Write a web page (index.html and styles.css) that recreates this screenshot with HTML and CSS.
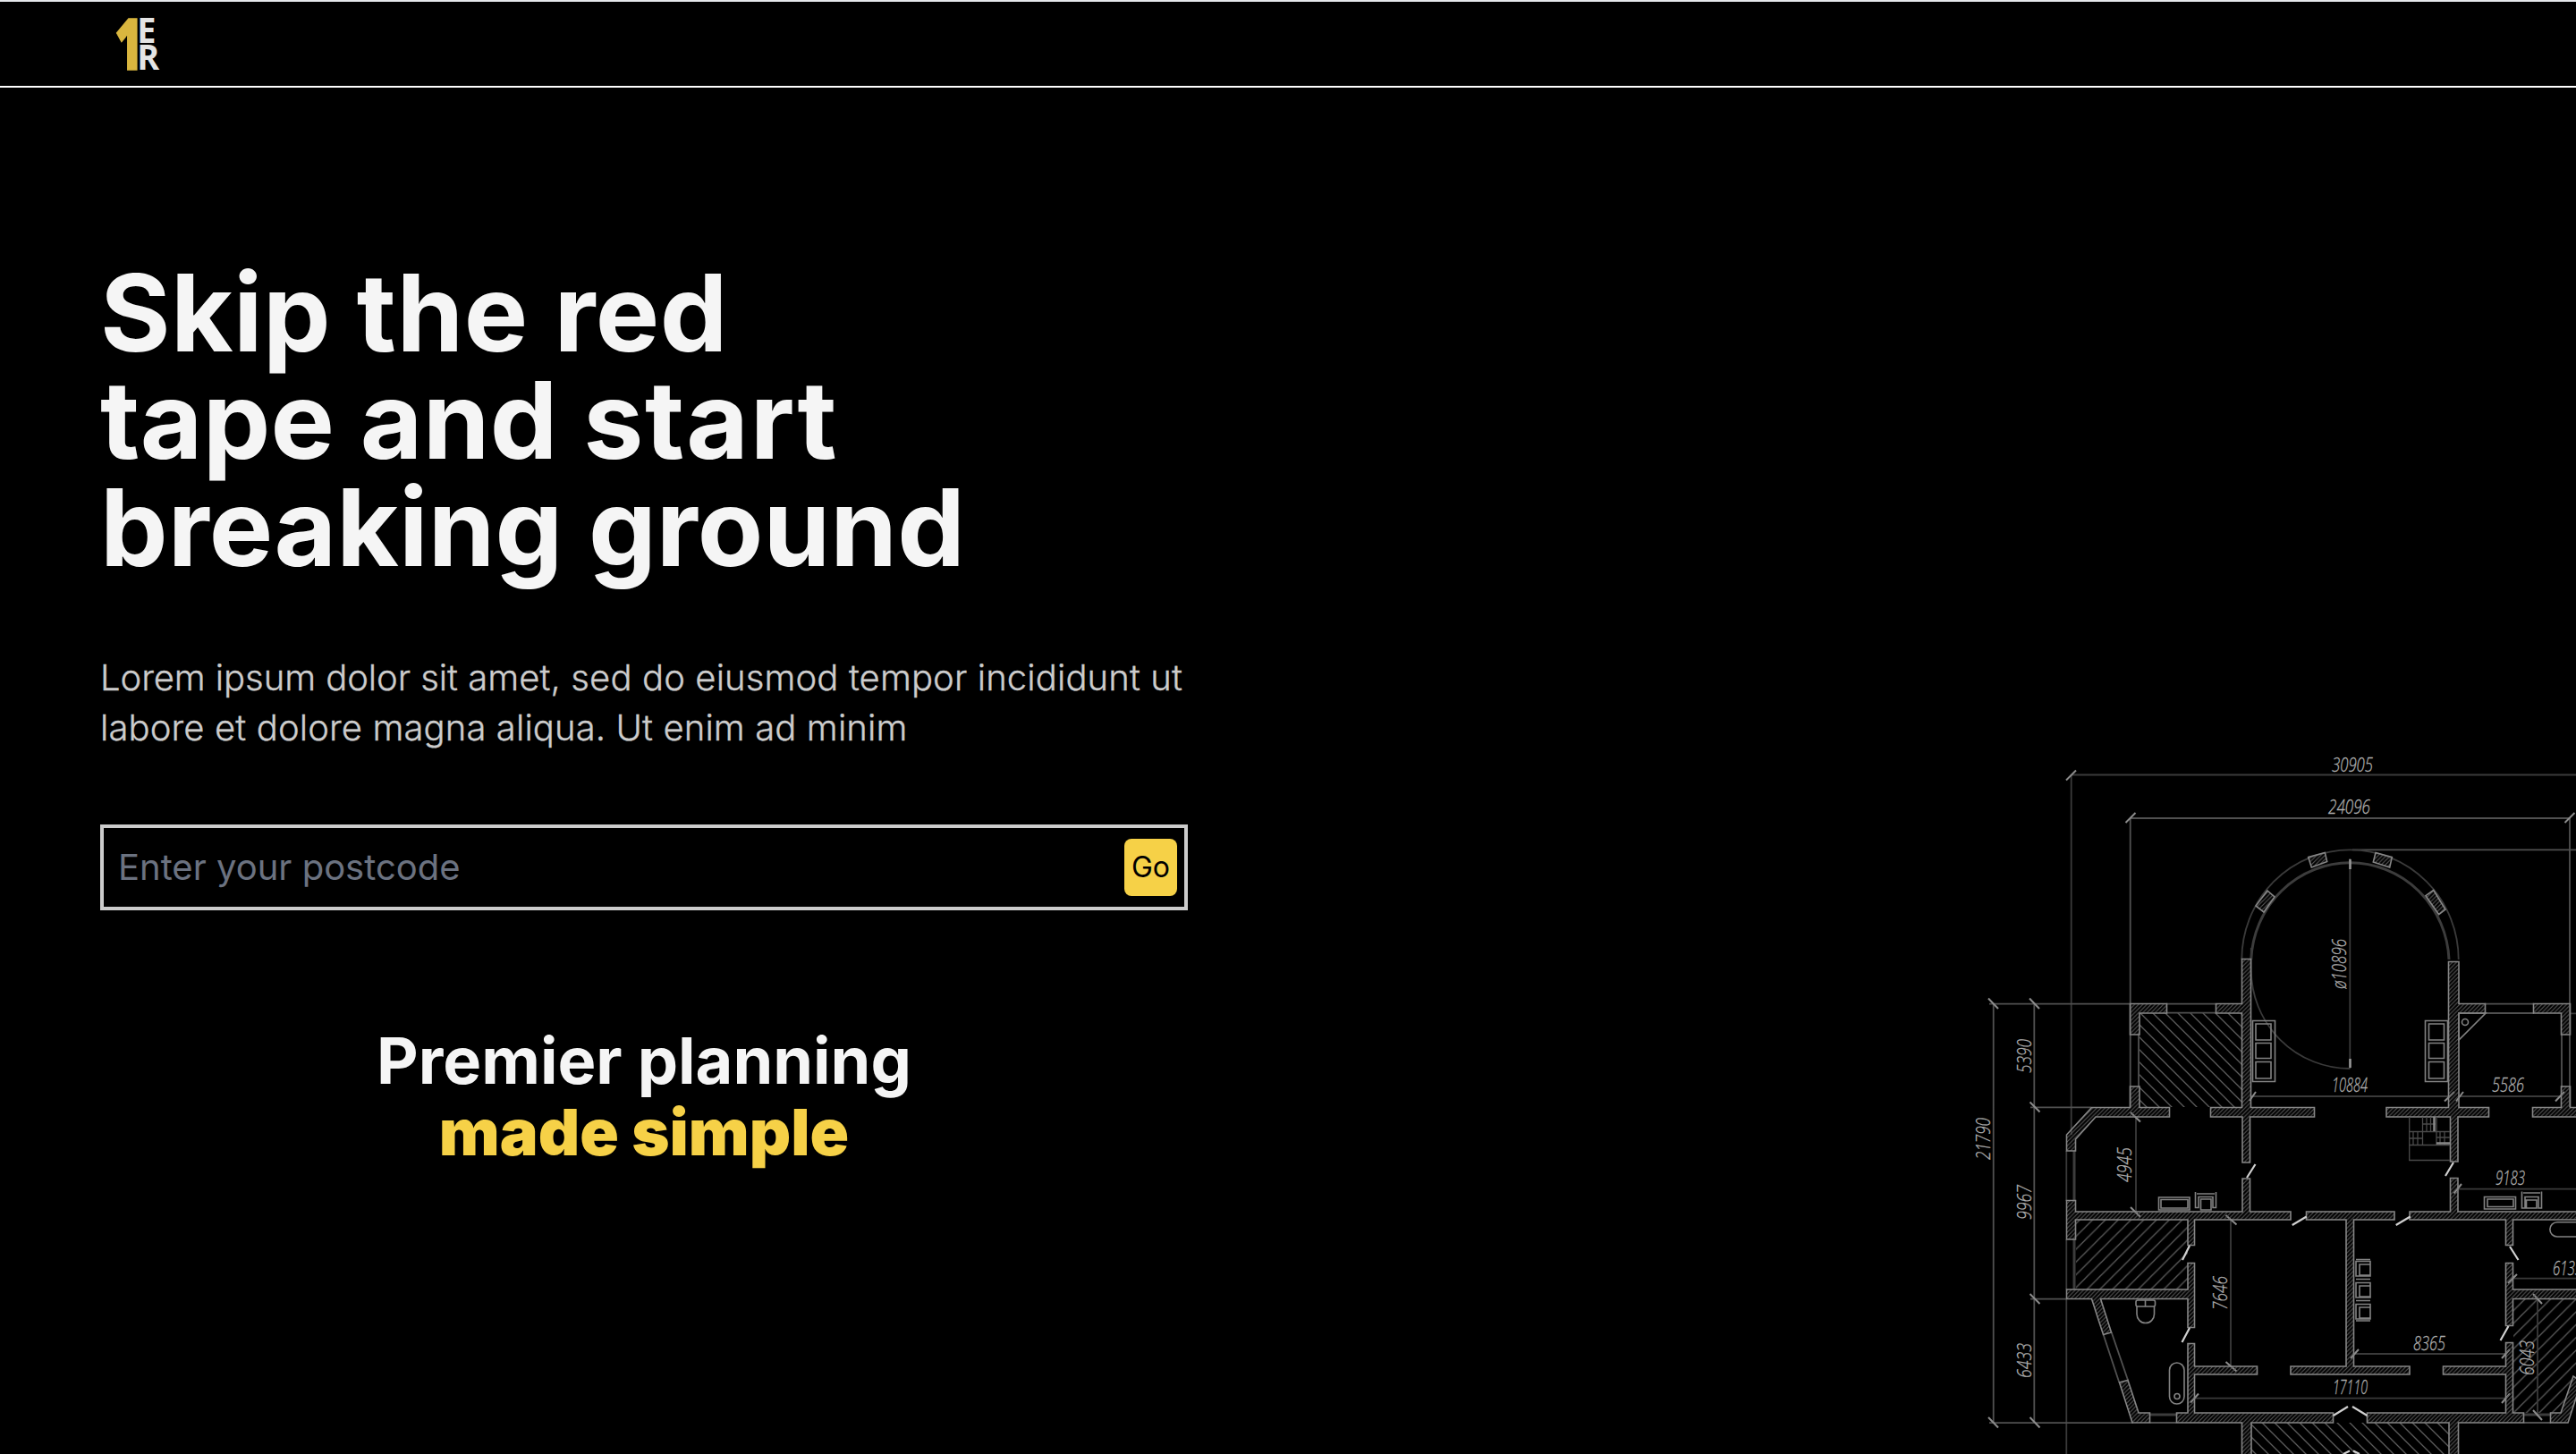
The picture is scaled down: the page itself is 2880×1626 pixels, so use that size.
FILE: index.html
```html
<!DOCTYPE html>
<html lang="en">
<head>
<meta charset="utf-8">
<title>1ER</title>
<link rel="stylesheet" href="styles.css">
</head>
<body>
<header class="nav">
  <svg class="logo" width="52" height="64" viewBox="0 0 52 64" role="img" aria-label="1ER">
    <text class="logo-one" transform="translate(.2 59.500) scale(.67 1)">1</text>
    <text class="logo-letter" transform="translate(25.2 30) scale(.97 1)">E</text>
    <text class="logo-letter" transform="translate(25.2 59.500) scale(.97 1)">R</text>
  </svg>
</header>
<main class="hero">
  <section class="copy">
    <h1 class="title"><span class="line line-one">Skip the red</span><span class="line line-two">tape and <span class="wide">start</span></span><span class="line line-three">breaking ground</span></h1>
    <p class="lead"><span class="lead-start">Lorem ipsum dolor sit</span> amet, sed do eiusmod tempor incididunt ut<br>labore et dolore magna aliqua. Ut enim ad minim</p>
    <form class="search">
      <input class="postcode" type="text" placeholder="Enter your postcode">
      <button class="go" type="button">Go</button>
    </form>
    <h2 class="tagline"><span class="tag-top">Premier planning</span><span class="tag-bottom">made simple</span></h2>
  </section>
  <svg class="plan" width="680" height="796" viewBox="2200 830 680 796" aria-hidden="true">
    <defs>
      <pattern id="brick" width="4.6" height="4.6" patternUnits="userSpaceOnUse"><path class="brick-line" d="M-1 5.6L5.6-1M-1 1L1-1M3.6 5.6L5.6 3.6"/></pattern>
      <pattern id="down" width="14" height="14" patternUnits="userSpaceOnUse"><path class="floor-line" d="M-1-1L15 15M-1 13L1 15M13-1L15 1"/></pattern>
      <pattern id="up" width="14.3" height="14.3" patternUnits="userSpaceOnUse"><path class="floor-line" d="M-1 15.3L15.3-1M-1 1L1-1M13.3 15.3L15.3 13.3"/></pattern>
    </defs>

    <!-- hatched floors -->
    <path fill="url(#down)" d="M2392 1133H2506V1238H2392zM2517 1591H2738V1626H2517z"/>
    <path fill="url(#up)" d="M2321 1364H2446V1442H2321zM2810 1453H2880V1528L2863 1580H2810z"/>

    <!-- dimension lines -->
    <g class="dim">
      <path d="M2316 866.5H2880M2315.7 866V1269M2310.3 1287V1343M2310.3 1386V1442M2310.3 1453V1626"/>
      <path class="mid" d="M2382 915H2873M2381.7 915V1238M2873 915V1238M2630 950.3H2880"/>
      <path class="mid" d="M2228.7 1122V1591M2274.3 1122V1591M2224 1122.7H2382M2270 1238.3H2338M2270 1452.7H2310M2224 1591.2H2385"/>
      <path d="M2627.3 960V1195M2517 1226H2738M2749 1226H2863M2873 1133.3H2880"/>
      <path d="M2388 1249V1355M2494 1364V1528M2837 1453V1584M2631 1514H2802M2453 1563.7H2802M2749 1329.7H2880M2809 1429.7H2880"/>
      <path class="mid" d="M2422 1122.7H2477M2422 1132.7H2477M2391 1157V1215M2778 1122.7H2833M2778 1133H2833M2864 1157V1215"/>
      <path class="thick" d="M2319 1287V1343M2319 1386V1442M2404 1582H2433M2822 1582H2852"/>
      <path class="mid" d="M2351.7 1492.7L2369.3 1546M2360.7 1490L2379 1543.3M2404 1591H2433M2822 1591H2852"/>
      <path d="M2506.3 1073A121.2 122.700 0 0 1 2748.7 1073"/>
      <path class="thick" d="M2516.8 1073A110.7 113 0 0 1 2738 1073"/>
      <path d="M2516.8 1060V1085A110.5 110.5 0 0 0 2627.3 1195"/>
    </g>
    <g class="tick">
      <path d="M2310 872.5L2321 861.5M2376.500 920L2387.500 909M2867.500 920L2878.500 909"/>
      <path d="M2223 1116.500L2234 1128M2269 1116.500L2280 1128M2269.500 1232.500L2280.500 1243.500M2269.500 1447L2280.500 1458M2223 1585L2234 1596.500M2269.500 1585L2280.500 1596.500"/>
      <path d="M2382 1244L2393 1254.500M2382 1350L2393 1361M2488.500 1359L2500.500 1369.500M2488.500 1523L2500.500 1533.500M2832 1447L2842 1458M2832 1577L2842 1588"/>
      <path d="M2515 1231L2522 1221M2733 1231.500L2744 1221M2746 1231.500L2754 1221M2857 1231.500L2867 1221M2743.500 1334.500L2752 1324M2804 1435L2814 1425M2628 1519L2637 1509M2797 1519L2806 1509M2449 1568.500L2458 1558.500M2797 1569L2806 1558.500"/>
    </g>

    <!-- walls -->
    <g class="wall">
      <path d="M2535 996L2543 1003L2531 1020L2522 1013zM2580.700 958.500L2599.300 953.500L2601.700 963.500L2584.300 970zM2656 953.500L2674.300 958.500L2671.700 970L2653.300 964zM2720.700 995.500L2734 1017L2726.700 1022.700L2712 1001.700z"/>
      <path d="M2506.500 1072.500H2516.500V1238.500H2587.500V1249H2515.500V1300H2507V1249H2471.500V1238.500H2506.500V1133H2477.500V1122.500H2506.500z"/>
      <path d="M2381.500 1122.500H2422.500V1133H2392V1157H2381.500z"/>
      <path d="M2338.500 1238.500H2381.500V1215H2392V1238.500H2425.500V1249H2343L2320.500 1274V1287H2310.500V1269z"/>
      <path d="M2737.500 1075.500H2749V1122.500H2778.500V1133H2749V1238.500H2782.500V1249H2748V1299H2739.500V1249H2668V1238.500H2737.500z"/>
      <path d="M2832.500 1122.500H2873.500V1157H2863.500V1133H2832.500z"/>
      <path d="M2882 1249H2831.500V1238.500H2863.500V1215H2873.500V1238.500H2882z"/>
      <path d="M2310.500 1342.500H2320.500V1355H2507V1318H2515.500V1355H2561V1364H2453.500V1392.500H2446V1364H2320.500V1386H2310.500z"/>
      <path d="M2578.500 1355H2677V1364H2631.500V1528H2694V1537H2561V1528H2623V1364H2578.500z"/>
      <path d="M2694 1355H2739.500V1317.500H2748V1355H2882V1364H2809.500V1392.500H2801.500V1364H2694z"/>
      <path d="M2310.500 1442H2446V1412.500H2453.500V1484.500H2446V1452.500H2348.500L2360.500 1490L2351.500 1492.500L2338.500 1452.500H2310.500z"/>
      <path d="M2369.500 1546L2379 1543.500L2391 1580H2403.500V1591H2384z"/>
      <path d="M2446 1502.500H2453.500V1528H2523.500V1537H2453.500V1580H2608.500V1591H2517V1628H2506.500V1591H2433.500V1580H2446z"/>
      <path d="M2801.500 1412.500H2809.500V1442H2882V1452.500H2809.500V1482.500H2801.500z"/>
      <path d="M2801.500 1501.500H2809.500V1580H2821.500V1591H2748.500V1628H2738V1591H2646.500V1580H2801.500V1537H2731.500V1528H2801.500z"/>
      <path d="M2851.500 1580H2863L2877 1539L2886 1545L2871 1591H2851.500z"/>
    </g>

    <!-- doors -->
    <path class="door" d="M2512 1317L2521.500 1302M2734 1315L2743 1300M2562.700 1370L2578.700 1360.500M2678.700 1370L2694.700 1360.500M2440 1409L2448 1393M2439.500 1501L2448 1485M2806 1394L2815.500 1409M2795.500 1499L2804.500 1483M2608.700 1583L2625 1573M2646.500 1583L2630 1573M2620 1626L2627 1622.500M2631 1622.500L2638 1626"/>
    <path class="arrow" d="M2627.500 961V972M2627.500 1184V1194"/>

    <!-- furniture -->
    <g class="item">
      <path d="M2518.500 1141.500H2543.500V1209.500H2518.500zM2522 1145H2539V1163H2522zM2522 1166.500H2539V1183.500H2522zM2522 1187.500H2539V1206H2522z"/>
      <path d="M2711.500 1141.500H2736.500V1209.500H2711.500zM2715.500 1145H2732.500V1163H2715.500zM2715.500 1166.500H2732.500V1183.500H2715.500zM2715.500 1187.500H2732.500V1206H2715.500z"/>
      <path d="M2413.500 1339H2448V1353H2413.500zM2416 1341.500H2446V1351H2416zM2777.500 1338.500H2812.500V1352H2777.500zM2781 1341H2810V1349.500H2781z"/>
      <path d="M2454.500 1333V1350.500H2458V1338.500H2474V1350.500H2477.500V1333M2456 1335H2476M2460.500 1353V1341H2472V1353zM2819.500 1332.500V1351H2823V1338.500H2838V1351H2841.500V1332.500M2821 1334H2840M2824.500 1351V1342H2836V1351z"/>
      <path d="M2634 1408.500H2650M2634 1410.500H2650V1427H2634zM2638 1414H2650V1426H2638zM2634 1430.500H2650M2634 1434.500H2650V1451H2634zM2638 1438H2650V1450H2638zM2634 1454.500H2650M2634 1458.500H2650V1475H2634zM2638 1462H2650V1474H2638zM2634 1477H2650"/>
      <path d="M2749 1133H2779L2749 1163z"/><circle cx="2756" cy="1143" r="3.500"/>
      <rect x="2388" y="1454" width="21.500" height="7" rx="2"/><path d="M2398.500 1454V1461M2389 1461V1469.500A9.700 10 0 0 0 2408.500 1469.500V1461"/>
      <rect x="2425.500" y="1524" width="16.500" height="46" rx="8.200"/><circle cx="2434" cy="1561.500" r="3"/>
      <path d="M2882 1366.700H2859A8.100 8.100 0 0 0 2859 1383H2882"/>
    </g>
    <g class="stairs">
      <path d="M2739 1297.500H2693.700V1249M2693.700 1265.500H2739M2693.700 1273H2708M2693.700 1280.500H2739M2708.500 1249V1280.500M2698 1265.500V1280.500M2703 1265.500V1280.500M2713 1249V1265.500M2717.500 1249V1265.500M2708.500 1257H2723M2724 1249V1280.500M2728 1265.500V1280.500M2733 1265.500V1280.500M2724 1272H2739"/>
      <path class="stairs-edge" d="M2721.500 1249V1265M2724 1278.500H2739"/>
    </g>

    <!-- measurements -->
    <g class="num">
      <text x="2607" y="863" textLength="46" lengthAdjust="spacingAndGlyphs">30905</text>
      <text x="2603" y="910" textLength="47" lengthAdjust="spacingAndGlyphs">24096</text>
      <text x="2607" y="1220.500" textLength="40" lengthAdjust="spacingAndGlyphs">10884</text>
      <text x="2786" y="1221" textLength="36" lengthAdjust="spacingAndGlyphs">5586</text>
      <text x="2790" y="1325" textLength="33" lengthAdjust="spacingAndGlyphs">9183</text>
      <text x="2854" y="1426" textLength="33" lengthAdjust="spacingAndGlyphs">6133</text>
      <text x="2698" y="1510" textLength="36" lengthAdjust="spacingAndGlyphs">8365</text>
      <text x="2608" y="1559" textLength="39" lengthAdjust="spacingAndGlyphs">17110</text>
      <text transform="translate(2271 1200) rotate(-90)" textLength="38" lengthAdjust="spacingAndGlyphs">5390</text>
      <text transform="translate(2225 1297) rotate(-90)" textLength="47" lengthAdjust="spacingAndGlyphs">21790</text>
      <text transform="translate(2271 1364) rotate(-90)" textLength="39" lengthAdjust="spacingAndGlyphs">9967</text>
      <text transform="translate(2271 1541) rotate(-90)" textLength="39" lengthAdjust="spacingAndGlyphs">6433</text>
      <text transform="translate(2383 1322) rotate(-90)" textLength="39" lengthAdjust="spacingAndGlyphs">4945</text>
      <text transform="translate(2490 1465) rotate(-90)" textLength="38" lengthAdjust="spacingAndGlyphs">7646</text>
      <text transform="translate(2833 1538) rotate(-90)" textLength="39" lengthAdjust="spacingAndGlyphs">6043</text>
      <text transform="translate(2623 1106) rotate(-90)" textLength="56" lengthAdjust="spacingAndGlyphs">ø10896</text>
    </g>
  </svg>
</main>
</body>
</html>
```
FILE: styles.css
```css
* { box-sizing: border-box; margin: 0; }

body {
  display: flex;
  flex-direction: column;
  height: 1626px;
  overflow: hidden;
  background: #000;
  color: #f5f5f5;
  font-family: Inter, sans-serif;
}

.nav {
  height: 98px;
  padding: 16px 128px 0;
  border-top: 2px solid #e5e7eb;
  border-bottom: 2px solid #fff;
}

.logo { display: block; overflow: visible; }
.logo-one {
  fill: #d9b63f;
  stroke: #d9b63f;
  stroke-width: 1.4;
  font: 800 80.5px "Open Sans", sans-serif;
}
.logo-letter { fill: #e4e4e4; font: 700 39px "Open Sans", sans-serif; }

.hero {
  flex: 1;
  display: flex;
  justify-content: space-between;
  align-items: flex-end;
}

.copy {
  align-self: flex-start;
  width: 1328px;
  padding: 192px 0 0 112px;
}

.title { font-size: 120px; line-height: 120px; font-weight: 700; white-space: nowrap; }
.line { display: block; }
.line-one { letter-spacing: .42px; }
.line-two { letter-spacing: .22px; }
.line-three { letter-spacing: .1px; }
.wide { letter-spacing: 1.7px; }

.lead {
  margin-top: 80px;
  font-size: 40px;
  line-height: 56px;
  font-weight: 300;
  letter-spacing: .11px;
  white-space: nowrap;
  color: #ccc;
  -webkit-text-stroke: .35px #ccc;
}
.lead-start { letter-spacing: -.08px; }

.search {
  display: flex;
  align-items: center;
  height: 96px;
  margin-top: 80px;
  padding: 0 8px 0 16px;
  border: 4px solid #ccc;
}

.postcode {
  flex: 1;
  padding: 0;
  border: 0;
  outline: 0;
  background: transparent;
  color: #fff;
  font: 400 40px/56px Inter, sans-serif;
}
.postcode::placeholder { color: #6b7280; opacity: 1; }

.go {
  height: 64px;
  padding: 0 8px;
  border: 0;
  border-radius: 8px;
  background: #f6d147;
  color: #000;
  font: 400 32px/48px Inter, sans-serif;
}

.tagline {
  display: flex;
  flex-direction: column;
  align-items: center;
  margin-top: 128px;
  font-size: 72px;
  line-height: 80px;
}
.tag-top { font-weight: 700; }
.tag-bottom { font-weight: 900; color: #f6d147; }

.plan { display: block; flex: none; }
.brick-line { stroke: #5a5a5a; stroke-width: 1.1; }
.floor-line { stroke: #5c5c5c; stroke-width: 1.3; }
.dim path { fill: none; stroke: #3a3a3a; stroke-width: 1.8; }
.dim .mid { stroke: #505050; }
.dim .thick { stroke: #3c3c3c; stroke-width: 3; }
.tick path { stroke: #8c8c8c; stroke-width: 2; }
.wall path { fill: url(#brick); stroke: #868686; stroke-width: 1.6; }
.door { fill: none; stroke: #d0d0d0; stroke-width: 2.2; }
.arrow { stroke: #999; stroke-width: 2.5; }
.item path, .item rect, .item circle { fill: none; stroke: #828282; stroke-width: 1.6; }
.stairs path { fill: none; stroke: #4a4a4a; stroke-width: 1.3; }
.stairs .stairs-edge { stroke: #888; stroke-width: 2.5; }
.num text {
  fill: #b0b0b0;
  stroke: #b0b0b0;
  stroke-width: .3;
  font: italic 300 22px "Open Sans", sans-serif;
}
```
